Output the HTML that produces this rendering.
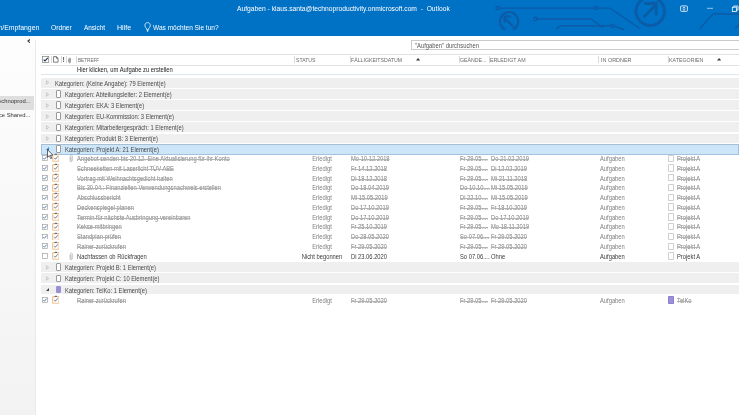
<!DOCTYPE html>
<html><head><meta charset="utf-8">
<style>
*{margin:0;padding:0;box-sizing:border-box}
html,body{width:739px;height:415px;overflow:hidden;background:#fff;font-family:"Liberation Sans",sans-serif}
body{will-change:transform}
.a{position:absolute;white-space:nowrap}
#top{position:absolute;left:0;top:0;width:739px;height:35.8px;background:#0072C6;overflow:hidden}
.wt{color:#fff}
.grp{position:absolute;left:41px;width:698px;height:9.85px;background:#EFEFEF}
.gt{position:absolute;top:0;line-height:10.05px;font-size:6.4px;color:#4a4a4a;white-space:nowrap;transform:scaleX(0.905);transform-origin:0 0}
.tri{position:absolute}
.cbx{position:absolute;width:5.3px;height:7.6px;border:0.6px solid #9a9a9a;background:#fff;border-radius:1px}
.it{position:absolute;left:0;width:739px;height:9.77px}
.t{position:absolute;top:0px;line-height:9.77px;font-size:6.4px;white-space:nowrap;color:#808080;transform:scaleX(0.905);transform-origin:0 0}
.s{text-decoration:line-through;text-decoration-color:#b4b4b4;text-decoration-thickness:0.5px}
.ck{position:absolute;left:42.1px;top:1.45px}
.ti{position:absolute;left:51.5px;top:-0.6px}
.cl{position:absolute;left:68.9px;top:0.1px}
.hd{position:absolute;top:56.1px;line-height:9.5px;font-size:5.6px;color:#6a6a6a;white-space:nowrap;transform-origin:0 0}
.sep{position:absolute;top:55.8px;width:0.6px;height:7.6px;background:#d8d8d8}
.ccb{position:absolute;left:668.3px;top:0.6px;width:5.4px;height:7.3px;border:0.6px solid #cfcfcf;background:#fff;border-radius:0.9px}
</style></head>
<body>
<div id="top">
  <div class="a wt" style="left:237px;top:4.7px;font-size:7.1px;line-height:8px;transform:scaleX(0.945);transform-origin:0 0">Aufgaben - klaus.santa@technoproductivity.onmicrosoft.com&nbsp;&nbsp;-&nbsp;&nbsp;Outlook</div>
  <div class="a wt" style="right:700px;top:22.8px;font-size:7.4px;line-height:9px;transform:scaleX(0.93);transform-origin:100% 0">Senden/Empfangen</div>
  <div class="a wt" style="left:50.7px;top:22.8px;font-size:7.3px;line-height:9px;transform:scaleX(0.915);transform-origin:0 0">Ordner</div>
  <div class="a wt" style="left:83.6px;top:22.8px;font-size:7.3px;line-height:9px;transform:scaleX(0.88);transform-origin:0 0">Ansicht</div>
  <div class="a wt" style="left:117px;top:22.8px;font-size:7.3px;line-height:9px;transform:scaleX(0.97);transform-origin:0 0">Hilfe</div>
  <div class="a wt" style="left:153.1px;top:22.8px;font-size:7.3px;line-height:9px;transform:scaleX(0.897);transform-origin:0 0">Was möchten Sie tun?</div>
<svg class="a" style="left:0;top:0" width="739" height="35.5" viewBox="0 0 739 35.5">
 <g fill="none" stroke="#0B5BA6" stroke-width="1.4" stroke-linecap="round">
  <path d="M499.3 8.1 H594.8 M598 8.1 H610 L639.7 28.4"/>
  <circle cx="497.6" cy="8.1" r="1.7"/>
  <circle cx="596.4" cy="8.1" r="1.6"/>
  <path d="M505.25 29.55 A9.1 9.1 0 1 1 512.95 29.55" stroke-width="2.2" stroke-linecap="butt"/>
  <path d="M512.8 26.2 L505.6 19" stroke-width="2.3"/><path d="M504.6 22.6 V16.4 H510.8" stroke-width="2.3" stroke-linecap="butt" stroke-linejoin="miter"/>
  <path d="M537.2 19 H591 L603 27.5"/>
  <circle cx="535.5" cy="19" r="1.7"/>
  <path d="M556.5 28.6 L561 25.7 H611.3 M613.9 25.9 L623.4 29.5"/>
  <circle cx="612.6" cy="25.7" r="1.6"/>
  <circle cx="650.2" cy="11.2" r="14.2" stroke-width="2.9"/>
  <path d="M644.3 16.6 L655 5.8" stroke-width="2.8"/><path d="M644.4 3.5 H656.2 V15.3" stroke-width="2.8" stroke-linecap="butt" stroke-linejoin="miter"/>
  <path d="M699.9 28.5 L713 14 H739 M735.4 28.5 L741 22"/>
 </g>
 <g fill="none" stroke="#fff" stroke-width="0.8">
  <rect x="680.6" y="5.9" width="6.8" height="5.5" rx="0.9"/>
  <path d="M684 7 V10.4 M682.6 8.2 L684 7 L685.4 8.2 M682.6 9.2 L684 10.4 L685.4 9.2" stroke-width="0.6"/>
  <path d="M707 8.3 H713" stroke-width="0.6"/>
  <rect x="732.3" y="7.2" width="4.2" height="4.2"/>
  <path d="M733.8 7.2 V6 H738 V10 H736.5"/>
 </g>
</svg>
  <svg class="a" style="left:143.8px;top:22.3px" width="7.2" height="10.2" viewBox="0 0 10 14"><path d="M5 0.8 C1.2 0.8 0.2 5 2.4 7.6 C3.4 8.8 3.8 9.6 3.8 10.6 H6.2 C6.2 9.6 6.6 8.8 7.6 7.6 C9.8 5 8.8 0.8 5 0.8 Z M3.9 11.9 H6.1 M4.3 13 H5.7" fill="none" stroke="#fff" stroke-width="1.1"/></svg>
</div>
<div class="a" style="left:0;top:35.5px;width:35.5px;height:380px;background:linear-gradient(#FDFDFD,#F8F8F8 50%,#F2F2F2)"></div>
<div class="a" style="left:35px;top:40px;width:1.2px;height:375px;background:#E9E9E9"></div>
<div class="a" style="left:0;top:96.4px;width:34.2px;height:13.2px;background:#DEDEDE"></div>
<div class="a" style="right:708.4px;top:95.4px;line-height:13.2px;font-size:5.85px;color:#333">klaus.santa@technoprod...</div>
<div class="a" style="right:708.6px;top:109.4px;line-height:12px;font-size:5.85px;color:#333">Office Shared...</div>

<svg class="a" style="left:26.7px;top:39.3px" width="3.8" height="4.2" viewBox="0 0 6 7"><path d="M4.8 0.9 L1.5 3.5 L4.8 6.1" fill="none" stroke="#333" stroke-width="1.9"/></svg>
<div class="a" style="left:411.4px;top:39.7px;width:340px;height:10.5px;border:0.7px solid #CACACA;background:#fff"></div>
<div class="a" style="left:414.6px;top:40.6px;line-height:10px;font-size:6.3px;color:#555;transform:scaleX(0.925);transform-origin:0 0">"Aufgaben" durchsuchen</div>
<svg class="a" style="left:42.4px;top:56.2px" width="7.4" height="6.8" viewBox="0 0 14 13"><rect x="0.8" y="0.8" width="12" height="11.4" fill="#fff" stroke="#7a7a7a" stroke-width="1.3"/><path d="M3 7 L5.6 9.5 L11 3.5" fill="none" stroke="#223048" stroke-width="2"/></svg>
<svg class="a" style="left:53px;top:56.2px" width="5.6" height="6.8" viewBox="0 0 10 12"><path d="M1 1 H6 L9 4 V11 H1 Z M6 1 V4 H9" fill="#fff" stroke="#505050" stroke-width="1.3"/></svg>
<div class="a" style="left:62.6px;top:56px;line-height:8.5px;font-size:6.8px;font-weight:bold;color:#4a4a4a">!</div>
<svg class="a" style="left:68.4px;top:56.8px" width="3.2" height="6.8" viewBox="0 0 8 16"><path d="M2 5 V12 A2 2 0 0 0 6 12 V3.5 A1.5 1.5 0 0 0 3 3.5 V11" fill="none" stroke="#555" stroke-width="1.6"/></svg>
<svg class="a" style="left:416.2px;top:58.2px" width="4.2" height="2.6" viewBox="0 0 4.2 2.6"><path d="M0 2.6 L2.1 0 L4.2 2.6 Z" fill="#3a3a3a"/></svg>
<svg class="a" style="left:717px;top:58.2px" width="4.2" height="2.6" viewBox="0 0 4.2 2.6"><path d="M0 2.6 L2.1 0 L4.2 2.6 Z" fill="#3a3a3a"/></svg>
<div class="a" style="left:41px;top:54.2px;width:698px;height:0.7px;background:#E2E2E2"></div>
<div class="a" style="left:41px;top:64.7px;width:698px;height:0.7px;background:#E2E2E2"></div>
<div class="hd" style="left:78.3px;transform:scaleX(0.83)">BETREFF</div>
<div class="hd" style="left:295.6px;transform:scaleX(0.913)">STATUS</div>
<div class="hd" style="left:351.2px;transform:scaleX(0.931)">FÄLLIGKEITSDATUM</div>
<div class="hd" style="left:460.4px;transform:scaleX(0.936)">GEÄNDE...</div>
<div class="hd" style="left:490.4px;transform:scaleX(0.948)">ERLEDIGT AM</div>
<div class="hd" style="left:600.5px;transform:scaleX(0.97)">IN ORDNER</div>
<div class="hd" style="left:669px;transform:scaleX(0.945)">KATEGORIEN</div>
<div class="sep" style="left:51.4px"></div><div class="sep" style="left:60.6px"></div><div class="sep" style="left:66.2px"></div><div class="sep" style="left:76.2px"></div><div class="sep" style="left:293.6px"></div><div class="sep" style="left:349.6px"></div><div class="sep" style="left:459px"></div><div class="sep" style="left:488.8px"></div><div class="sep" style="left:598.4px"></div><div class="sep" style="left:667.6px"></div><div class="a" style="left:77px;top:65.3px;line-height:10px;font-size:6.3px;color:#222;transform:scaleX(0.925);transform-origin:0 0">Hier klicken, um Aufgabe zu erstellen</div>
<div class="a" style="left:41px;top:74px;width:698px;height:0.7px;background:#DCE6EE"></div>
<div class="grp" style="top:77.80px"><svg class="tri" style="left:5.4px;top:2.6px" width="3.2" height="5" viewBox="0 0 6 9"><path d="M1 1 L5 4.5 L1 8 Z" fill="none" stroke="#b4b4b4" stroke-width="1.1" stroke-linejoin="round"/></svg><div class="gt" style="left:14.3px;top:0.95px">Kategorien: (Keine Angabe): 79 Element(e)</div></div><div class="grp" style="top:88.95px"><svg class="tri" style="left:5.4px;top:2.6px" width="3.2" height="5" viewBox="0 0 6 9"><path d="M1 1 L5 4.5 L1 8 Z" fill="none" stroke="#b4b4b4" stroke-width="1.1" stroke-linejoin="round"/></svg><div class="cbx" style="left:14.6px;top:1.2px"></div><div class="gt" style="left:24.2px;top:0.95px">Kategorien: Abteilungsleiter: 2 Element(e)</div></div><div class="grp" style="top:100.10px"><svg class="tri" style="left:5.4px;top:2.6px" width="3.2" height="5" viewBox="0 0 6 9"><path d="M1 1 L5 4.5 L1 8 Z" fill="none" stroke="#b4b4b4" stroke-width="1.1" stroke-linejoin="round"/></svg><div class="cbx" style="left:14.6px;top:1.2px"></div><div class="gt" style="left:24.2px;top:0.95px">Kategorien: EKA: 3 Element(e)</div></div><div class="grp" style="top:111.25px"><svg class="tri" style="left:5.4px;top:2.6px" width="3.2" height="5" viewBox="0 0 6 9"><path d="M1 1 L5 4.5 L1 8 Z" fill="none" stroke="#b4b4b4" stroke-width="1.1" stroke-linejoin="round"/></svg><div class="cbx" style="left:14.6px;top:1.2px"></div><div class="gt" style="left:24.2px;top:0.95px">Kategorien: EU-Kommission: 3 Element(e)</div></div><div class="grp" style="top:122.40px"><svg class="tri" style="left:5.4px;top:2.6px" width="3.2" height="5" viewBox="0 0 6 9"><path d="M1 1 L5 4.5 L1 8 Z" fill="none" stroke="#b4b4b4" stroke-width="1.1" stroke-linejoin="round"/></svg><div class="cbx" style="left:14.6px;top:1.2px"></div><div class="gt" style="left:24.2px;top:0.95px">Kategorien: Mitarbeitergespräch: 1 Element(e)</div></div><div class="grp" style="top:133.55px"><svg class="tri" style="left:5.4px;top:2.6px" width="3.2" height="5" viewBox="0 0 6 9"><path d="M1 1 L5 4.5 L1 8 Z" fill="none" stroke="#b4b4b4" stroke-width="1.1" stroke-linejoin="round"/></svg><div class="cbx" style="left:14.6px;top:1.2px"></div><div class="gt" style="left:24.2px;top:0.95px">Kategorien: Produkt B: 3 Element(e)</div></div><div class="grp" style="top:143.70px;height:11.0px;background:#CCE5F8;border:0.7px solid #9FC3E0;border-top-color:#A8BFD2"><div class="cbx" style="left:13.9px;top:0.5px"></div><div class="gt" style="left:22.73px;top:0.75px">Kategorien: Projekt A: 21 Element(e)</div></div><div class="it" style="top:154.00px"><svg class="ck" viewBox="0 0 12 12" width="5.9" height="5.9"><rect x="0.8" y="0.8" width="10.4" height="10.4" fill="#fff" stroke="#9a9a9a" stroke-width="1.3"/><path d="M2.7 6.3 L5 8.7 L9.5 3.2" fill="none" stroke="#3a68a6" stroke-width="1.7"/></svg><svg class="ti" viewBox="0 0 14 16" width="7.7" height="8.8"><rect x="1.2" y="3" width="11.6" height="12" rx="1" fill="#fff" stroke="#EFC396" stroke-width="2.2"/><path d="M4.2 3.8 L5.2 1.2 H8.8 L9.8 3.8 Z" fill="#6a7078"/><path d="M4 8.8 L6.2 11.4 L10.4 6" fill="none" stroke="#3a4a62" stroke-width="1.3"/></svg><svg class="cl" viewBox="0 0 9 18" width="4.3" height="8.8"><path d="M2 5.5 V13.5 A2.5 2.5 0 0 0 7 13.5 V4 A2 2 0 0 0 3 4 V12.5 A1.5 1.5 0 0 0 6 12.5 V6" fill="none" stroke="#a4a4a4" stroke-width="1.1"/></svg><div class="t s" style="left:77px">Angebot senden bis 20.12. Eine Aktualisierung für ihr Konto</div><div class="t" style="left:271.7px;width:100px;text-align:center;transform-origin:50% 0">Erledigt</div><div class="t s" style="left:351px">Mo 10.12.2018</div><div class="t s" style="left:460.1px">Fr 29.05....</div><div class="t s" style="left:490.5px">Do 21.02.2019</div><div class="t" style="left:600.2px">Aufgaben</div><div class="ccb"></div><div class="t s" style="left:676.5px">Projekt A</div></div><div class="it" style="top:163.77px"><svg class="ck" viewBox="0 0 12 12" width="5.9" height="5.9"><rect x="0.8" y="0.8" width="10.4" height="10.4" fill="#fff" stroke="#9a9a9a" stroke-width="1.3"/><path d="M2.7 6.3 L5 8.7 L9.5 3.2" fill="none" stroke="#3a68a6" stroke-width="1.7"/></svg><svg class="ti" viewBox="0 0 14 16" width="7.7" height="8.8"><rect x="1.2" y="3" width="11.6" height="12" rx="1" fill="#fff" stroke="#EFC396" stroke-width="2.2"/><path d="M4.2 3.8 L5.2 1.2 H8.8 L9.8 3.8 Z" fill="#6a7078"/><path d="M4 8.8 L6.2 11.4 L10.4 6" fill="none" stroke="#3a4a62" stroke-width="1.3"/></svg><div class="t s" style="left:77px">Schneeketten mit Laserlicht TÜV ABE</div><div class="t" style="left:271.7px;width:100px;text-align:center;transform-origin:50% 0">Erledigt</div><div class="t s" style="left:351px">Fr 14.12.2018</div><div class="t s" style="left:460.1px">Fr 29.05....</div><div class="t s" style="left:490.5px">Di 12.02.2019</div><div class="t" style="left:600.2px">Aufgaben</div><div class="ccb"></div><div class="t s" style="left:676.5px">Projekt A</div></div><div class="it" style="top:173.54px"><svg class="ck" viewBox="0 0 12 12" width="5.9" height="5.9"><rect x="0.8" y="0.8" width="10.4" height="10.4" fill="#fff" stroke="#9a9a9a" stroke-width="1.3"/><path d="M2.7 6.3 L5 8.7 L9.5 3.2" fill="none" stroke="#3a68a6" stroke-width="1.7"/></svg><svg class="ti" viewBox="0 0 14 16" width="7.7" height="8.8"><rect x="1.2" y="3" width="11.6" height="12" rx="1" fill="#fff" stroke="#EFC396" stroke-width="2.2"/><path d="M4.2 3.8 L5.2 1.2 H8.8 L9.8 3.8 Z" fill="#6a7078"/><path d="M4 8.8 L6.2 11.4 L10.4 6" fill="none" stroke="#3a4a62" stroke-width="1.3"/></svg><div class="t s" style="left:77px">Vortrag mit Weihnachtsgedicht halten</div><div class="t" style="left:271.7px;width:100px;text-align:center;transform-origin:50% 0">Erledigt</div><div class="t s" style="left:351px">Di 18.12.2018</div><div class="t s" style="left:460.1px">Fr 29.05....</div><div class="t s" style="left:490.5px">Mi 21.11.2018</div><div class="t" style="left:600.2px">Aufgaben</div><div class="ccb"></div><div class="t s" style="left:676.5px">Projekt A</div></div><div class="it" style="top:183.31px"><svg class="ck" viewBox="0 0 12 12" width="5.9" height="5.9"><rect x="0.8" y="0.8" width="10.4" height="10.4" fill="#fff" stroke="#9a9a9a" stroke-width="1.3"/><path d="M2.7 6.3 L5 8.7 L9.5 3.2" fill="none" stroke="#3a68a6" stroke-width="1.7"/></svg><svg class="ti" viewBox="0 0 14 16" width="7.7" height="8.8"><rect x="1.2" y="3" width="11.6" height="12" rx="1" fill="#fff" stroke="#EFC396" stroke-width="2.2"/><path d="M4.2 3.8 L5.2 1.2 H8.8 L9.8 3.8 Z" fill="#6a7078"/><path d="M4 8.8 L6.2 11.4 L10.4 6" fill="none" stroke="#3a4a62" stroke-width="1.3"/></svg><div class="t s" style="left:77px">Bis 30.04.: Finanziellen Verwendungsnachweis erstellen</div><div class="t" style="left:271.7px;width:100px;text-align:center;transform-origin:50% 0">Erledigt</div><div class="t s" style="left:351px">Do 18.04.2019</div><div class="t s" style="left:460.1px">Do 10.10....</div><div class="t s" style="left:490.5px">Mi 15.05.2019</div><div class="t" style="left:600.2px">Aufgaben</div><div class="ccb"></div><div class="t s" style="left:676.5px">Projekt A</div></div><div class="it" style="top:193.08px"><svg class="ck" viewBox="0 0 12 12" width="5.9" height="5.9"><rect x="0.8" y="0.8" width="10.4" height="10.4" fill="#fff" stroke="#9a9a9a" stroke-width="1.3"/><path d="M2.7 6.3 L5 8.7 L9.5 3.2" fill="none" stroke="#3a68a6" stroke-width="1.7"/></svg><svg class="ti" viewBox="0 0 14 16" width="7.7" height="8.8"><rect x="1.2" y="3" width="11.6" height="12" rx="1" fill="#fff" stroke="#EFC396" stroke-width="2.2"/><path d="M4.2 3.8 L5.2 1.2 H8.8 L9.8 3.8 Z" fill="#6a7078"/><path d="M4 8.8 L6.2 11.4 L10.4 6" fill="none" stroke="#3a4a62" stroke-width="1.3"/></svg><div class="t s" style="left:77px">Abschlussbericht</div><div class="t" style="left:271.7px;width:100px;text-align:center;transform-origin:50% 0">Erledigt</div><div class="t s" style="left:351px">Mi 15.05.2019</div><div class="t s" style="left:460.1px">Di 22.10....</div><div class="t s" style="left:490.5px">Mi 15.05.2019</div><div class="t" style="left:600.2px">Aufgaben</div><div class="ccb"></div><div class="t s" style="left:676.5px">Projekt A</div></div><div class="it" style="top:202.85px"><svg class="ck" viewBox="0 0 12 12" width="5.9" height="5.9"><rect x="0.8" y="0.8" width="10.4" height="10.4" fill="#fff" stroke="#9a9a9a" stroke-width="1.3"/><path d="M2.7 6.3 L5 8.7 L9.5 3.2" fill="none" stroke="#3a68a6" stroke-width="1.7"/></svg><svg class="ti" viewBox="0 0 14 16" width="7.7" height="8.8"><rect x="1.2" y="3" width="11.6" height="12" rx="1" fill="#fff" stroke="#EFC396" stroke-width="2.2"/><path d="M4.2 3.8 L5.2 1.2 H8.8 L9.8 3.8 Z" fill="#6a7078"/><path d="M4 8.8 L6.2 11.4 L10.4 6" fill="none" stroke="#3a4a62" stroke-width="1.3"/></svg><div class="t s" style="left:77px">Deckenspiegel planen</div><div class="t" style="left:271.7px;width:100px;text-align:center;transform-origin:50% 0">Erledigt</div><div class="t s" style="left:351px">Do 17.10.2019</div><div class="t s" style="left:460.1px">Fr 29.05....</div><div class="t s" style="left:490.5px">Fr 18.10.2019</div><div class="t" style="left:600.2px">Aufgaben</div><div class="ccb"></div><div class="t s" style="left:676.5px">Projekt A</div></div><div class="it" style="top:212.62px"><svg class="ck" viewBox="0 0 12 12" width="5.9" height="5.9"><rect x="0.8" y="0.8" width="10.4" height="10.4" fill="#fff" stroke="#9a9a9a" stroke-width="1.3"/><path d="M2.7 6.3 L5 8.7 L9.5 3.2" fill="none" stroke="#3a68a6" stroke-width="1.7"/></svg><svg class="ti" viewBox="0 0 14 16" width="7.7" height="8.8"><rect x="1.2" y="3" width="11.6" height="12" rx="1" fill="#fff" stroke="#EFC396" stroke-width="2.2"/><path d="M4.2 3.8 L5.2 1.2 H8.8 L9.8 3.8 Z" fill="#6a7078"/><path d="M4 8.8 L6.2 11.4 L10.4 6" fill="none" stroke="#3a4a62" stroke-width="1.3"/></svg><div class="t s" style="left:77px">Termin für nächste Ausbringung vereinbaren</div><div class="t" style="left:271.7px;width:100px;text-align:center;transform-origin:50% 0">Erledigt</div><div class="t s" style="left:351px">Do 17.10.2019</div><div class="t s" style="left:460.1px">Fr 29.05....</div><div class="t s" style="left:490.5px">Do 17.10.2019</div><div class="t" style="left:600.2px">Aufgaben</div><div class="ccb"></div><div class="t s" style="left:676.5px">Projekt A</div></div><div class="it" style="top:222.39px"><svg class="ck" viewBox="0 0 12 12" width="5.9" height="5.9"><rect x="0.8" y="0.8" width="10.4" height="10.4" fill="#fff" stroke="#9a9a9a" stroke-width="1.3"/><path d="M2.7 6.3 L5 8.7 L9.5 3.2" fill="none" stroke="#3a68a6" stroke-width="1.7"/></svg><svg class="ti" viewBox="0 0 14 16" width="7.7" height="8.8"><rect x="1.2" y="3" width="11.6" height="12" rx="1" fill="#fff" stroke="#EFC396" stroke-width="2.2"/><path d="M4.2 3.8 L5.2 1.2 H8.8 L9.8 3.8 Z" fill="#6a7078"/><path d="M4 8.8 L6.2 11.4 L10.4 6" fill="none" stroke="#3a4a62" stroke-width="1.3"/></svg><div class="t s" style="left:77px">Kekse mitbringen</div><div class="t" style="left:271.7px;width:100px;text-align:center;transform-origin:50% 0">Erledigt</div><div class="t s" style="left:351px">Fr 25.10.2019</div><div class="t s" style="left:460.1px">Fr 29.05....</div><div class="t s" style="left:490.5px">Mo 18.11.2019</div><div class="t" style="left:600.2px">Aufgaben</div><div class="ccb"></div><div class="t s" style="left:676.5px">Projekt A</div></div><div class="it" style="top:232.16px"><svg class="ck" viewBox="0 0 12 12" width="5.9" height="5.9"><rect x="0.8" y="0.8" width="10.4" height="10.4" fill="#fff" stroke="#9a9a9a" stroke-width="1.3"/><path d="M2.7 6.3 L5 8.7 L9.5 3.2" fill="none" stroke="#3a68a6" stroke-width="1.7"/></svg><svg class="ti" viewBox="0 0 14 16" width="7.7" height="8.8"><rect x="1.2" y="3" width="11.6" height="12" rx="1" fill="#fff" stroke="#EFC396" stroke-width="2.2"/><path d="M4.2 3.8 L5.2 1.2 H8.8 L9.8 3.8 Z" fill="#6a7078"/><path d="M4 8.8 L6.2 11.4 L10.4 6" fill="none" stroke="#3a4a62" stroke-width="1.3"/></svg><div class="t s" style="left:77px">Standplan prüfen</div><div class="t" style="left:271.7px;width:100px;text-align:center;transform-origin:50% 0">Erledigt</div><div class="t s" style="left:351px">Do 28.05.2020</div><div class="t s" style="left:460.1px">So 07.06....</div><div class="t s" style="left:490.5px">Fr 29.05.2020</div><div class="t" style="left:600.2px">Aufgaben</div><div class="ccb"></div><div class="t s" style="left:676.5px">Projekt A</div></div><div class="it" style="top:241.93px"><svg class="ck" viewBox="0 0 12 12" width="5.9" height="5.9"><rect x="0.8" y="0.8" width="10.4" height="10.4" fill="#fff" stroke="#9a9a9a" stroke-width="1.3"/><path d="M2.7 6.3 L5 8.7 L9.5 3.2" fill="none" stroke="#3a68a6" stroke-width="1.7"/></svg><svg class="ti" viewBox="0 0 14 16" width="7.7" height="8.8"><rect x="1.2" y="3" width="11.6" height="12" rx="1" fill="#fff" stroke="#EFC396" stroke-width="2.2"/><path d="M4.2 3.8 L5.2 1.2 H8.8 L9.8 3.8 Z" fill="#6a7078"/><path d="M4 8.8 L6.2 11.4 L10.4 6" fill="none" stroke="#3a4a62" stroke-width="1.3"/></svg><div class="t s" style="left:77px">Rainer zurückrufen</div><div class="t" style="left:271.7px;width:100px;text-align:center;transform-origin:50% 0">Erledigt</div><div class="t s" style="left:351px">Fr 29.05.2020</div><div class="t s" style="left:460.1px">Fr 29.05....</div><div class="t s" style="left:490.5px">Fr 29.05.2020</div><div class="t" style="left:600.2px">Aufgaben</div><div class="ccb"></div><div class="t s" style="left:676.5px">Projekt A</div></div><div class="it" style="top:251.70px"><svg class="ck" viewBox="0 0 12 12" width="5.9" height="5.9"><rect x="0.8" y="0.8" width="10.4" height="10.4" fill="#fff" stroke="#9a9a9a" stroke-width="1.3"/></svg><svg class="ti" viewBox="0 0 14 16" width="7.7" height="8.8"><rect x="1.2" y="3" width="11.6" height="12" rx="1" fill="#fff" stroke="#EFC396" stroke-width="2.2"/><path d="M4.2 3.8 L5.2 1.2 H8.8 L9.8 3.8 Z" fill="#6a7078"/><path d="M4 8.8 L6.2 11.4 L10.4 6" fill="none" stroke="#3a4a62" stroke-width="1.3"/></svg><svg class="cl" viewBox="0 0 9 18" width="4.3" height="8.8"><path d="M2 5.5 V13.5 A2.5 2.5 0 0 0 7 13.5 V4 A2 2 0 0 0 3 4 V12.5 A1.5 1.5 0 0 0 6 12.5 V6" fill="none" stroke="#a4a4a4" stroke-width="1.1"/></svg><div class="t" style="left:77px;color:#3a3a3a">Nachfassen ob Rückfragen</div><div class="t" style="left:271.7px;width:100px;text-align:center;transform-origin:50% 0;color:#3a3a3a">Nicht begonnen</div><div class="t" style="left:351px;color:#3a3a3a">Di 23.06.2020</div><div class="t" style="left:460.1px;color:#3a3a3a">So 07.06....</div><div class="t" style="left:490.5px;color:#3a3a3a">Ohne</div><div class="t" style="left:600.2px;color:#3a3a3a">Aufgaben</div><div class="ccb"></div><div class="t" style="left:676.5px;color:#3a3a3a">Projekt A</div></div><div class="grp" style="top:262.30px"><svg class="tri" style="left:5.4px;top:2.6px" width="3.2" height="5" viewBox="0 0 6 9"><path d="M1 1 L5 4.5 L1 8 Z" fill="none" stroke="#b4b4b4" stroke-width="1.1" stroke-linejoin="round"/></svg><div class="cbx" style="left:14.6px;top:1.2px"></div><div class="gt" style="left:24.2px;top:0.95px">Kategorien: Projekt B: 1 Element(e)</div></div><div class="grp" style="top:273.45px"><svg class="tri" style="left:5.4px;top:2.6px" width="3.2" height="5" viewBox="0 0 6 9"><path d="M1 1 L5 4.5 L1 8 Z" fill="none" stroke="#b4b4b4" stroke-width="1.1" stroke-linejoin="round"/></svg><div class="cbx" style="left:14.6px;top:1.2px"></div><div class="gt" style="left:24.2px;top:0.95px">Kategorien: Projekt C: 10 Element(e)</div></div><div class="grp" style="top:284.60px"><div class="a" style="left:4.9px;top:3.6px;width:0;height:0;border-left:3px solid transparent;border-bottom:3px solid #404040"></div><div class="cbx" style="left:14.6px;top:1.2px;background:#9C8FD6;border-color:#9C8FD6"></div><div class="gt" style="left:24.2px;top:0.95px">Kategorien: TelKo: 1 Element(e)</div></div><div class="it" style="top:295.80px"><svg class="ck" viewBox="0 0 12 12" width="5.9" height="5.9"><rect x="0.8" y="0.8" width="10.4" height="10.4" fill="#fff" stroke="#9a9a9a" stroke-width="1.3"/><path d="M2.7 6.3 L5 8.7 L9.5 3.2" fill="none" stroke="#3a68a6" stroke-width="1.7"/></svg><svg class="ti" viewBox="0 0 14 16" width="7.7" height="8.8"><rect x="1.2" y="3" width="11.6" height="12" rx="1" fill="#fff" stroke="#EFC396" stroke-width="2.2"/><path d="M4.2 3.8 L5.2 1.2 H8.8 L9.8 3.8 Z" fill="#6a7078"/><path d="M4 8.8 L6.2 11.4 L10.4 6" fill="none" stroke="#3a4a62" stroke-width="1.3"/></svg><div class="t s" style="left:77px">Rainer zurückrufen</div><div class="t" style="left:271.7px;width:100px;text-align:center;transform-origin:50% 0">Erledigt</div><div class="t s" style="left:351px">Fr 29.05.2020</div><div class="t s" style="left:460.1px">Fr 29.05....</div><div class="t s" style="left:490.5px">Fr 29.05.2020</div><div class="t" style="left:600.2px">Aufgaben</div><div class="ccb" style="background:#9C8FD6;border-color:#8E80CF"></div><div class="t s" style="left:676.5px">TelKo</div></div><div class="a" style="left:45.6px;top:147.4px;width:0;height:0;border-left:3px solid transparent;border-bottom:3px solid #2A7FD0"></div>
<svg class="a" style="left:46.5px;top:149.3px" width="6.4" height="10.4" viewBox="0 0 12 19.5"><path d="M1 1 V15.5 L4.4 12.4 L6.9 18 L8.9 17.1 L6.5 11.8 H11 Z" fill="#fff" stroke="#222" stroke-width="1.3" stroke-linejoin="round"/></svg>
</body></html>
